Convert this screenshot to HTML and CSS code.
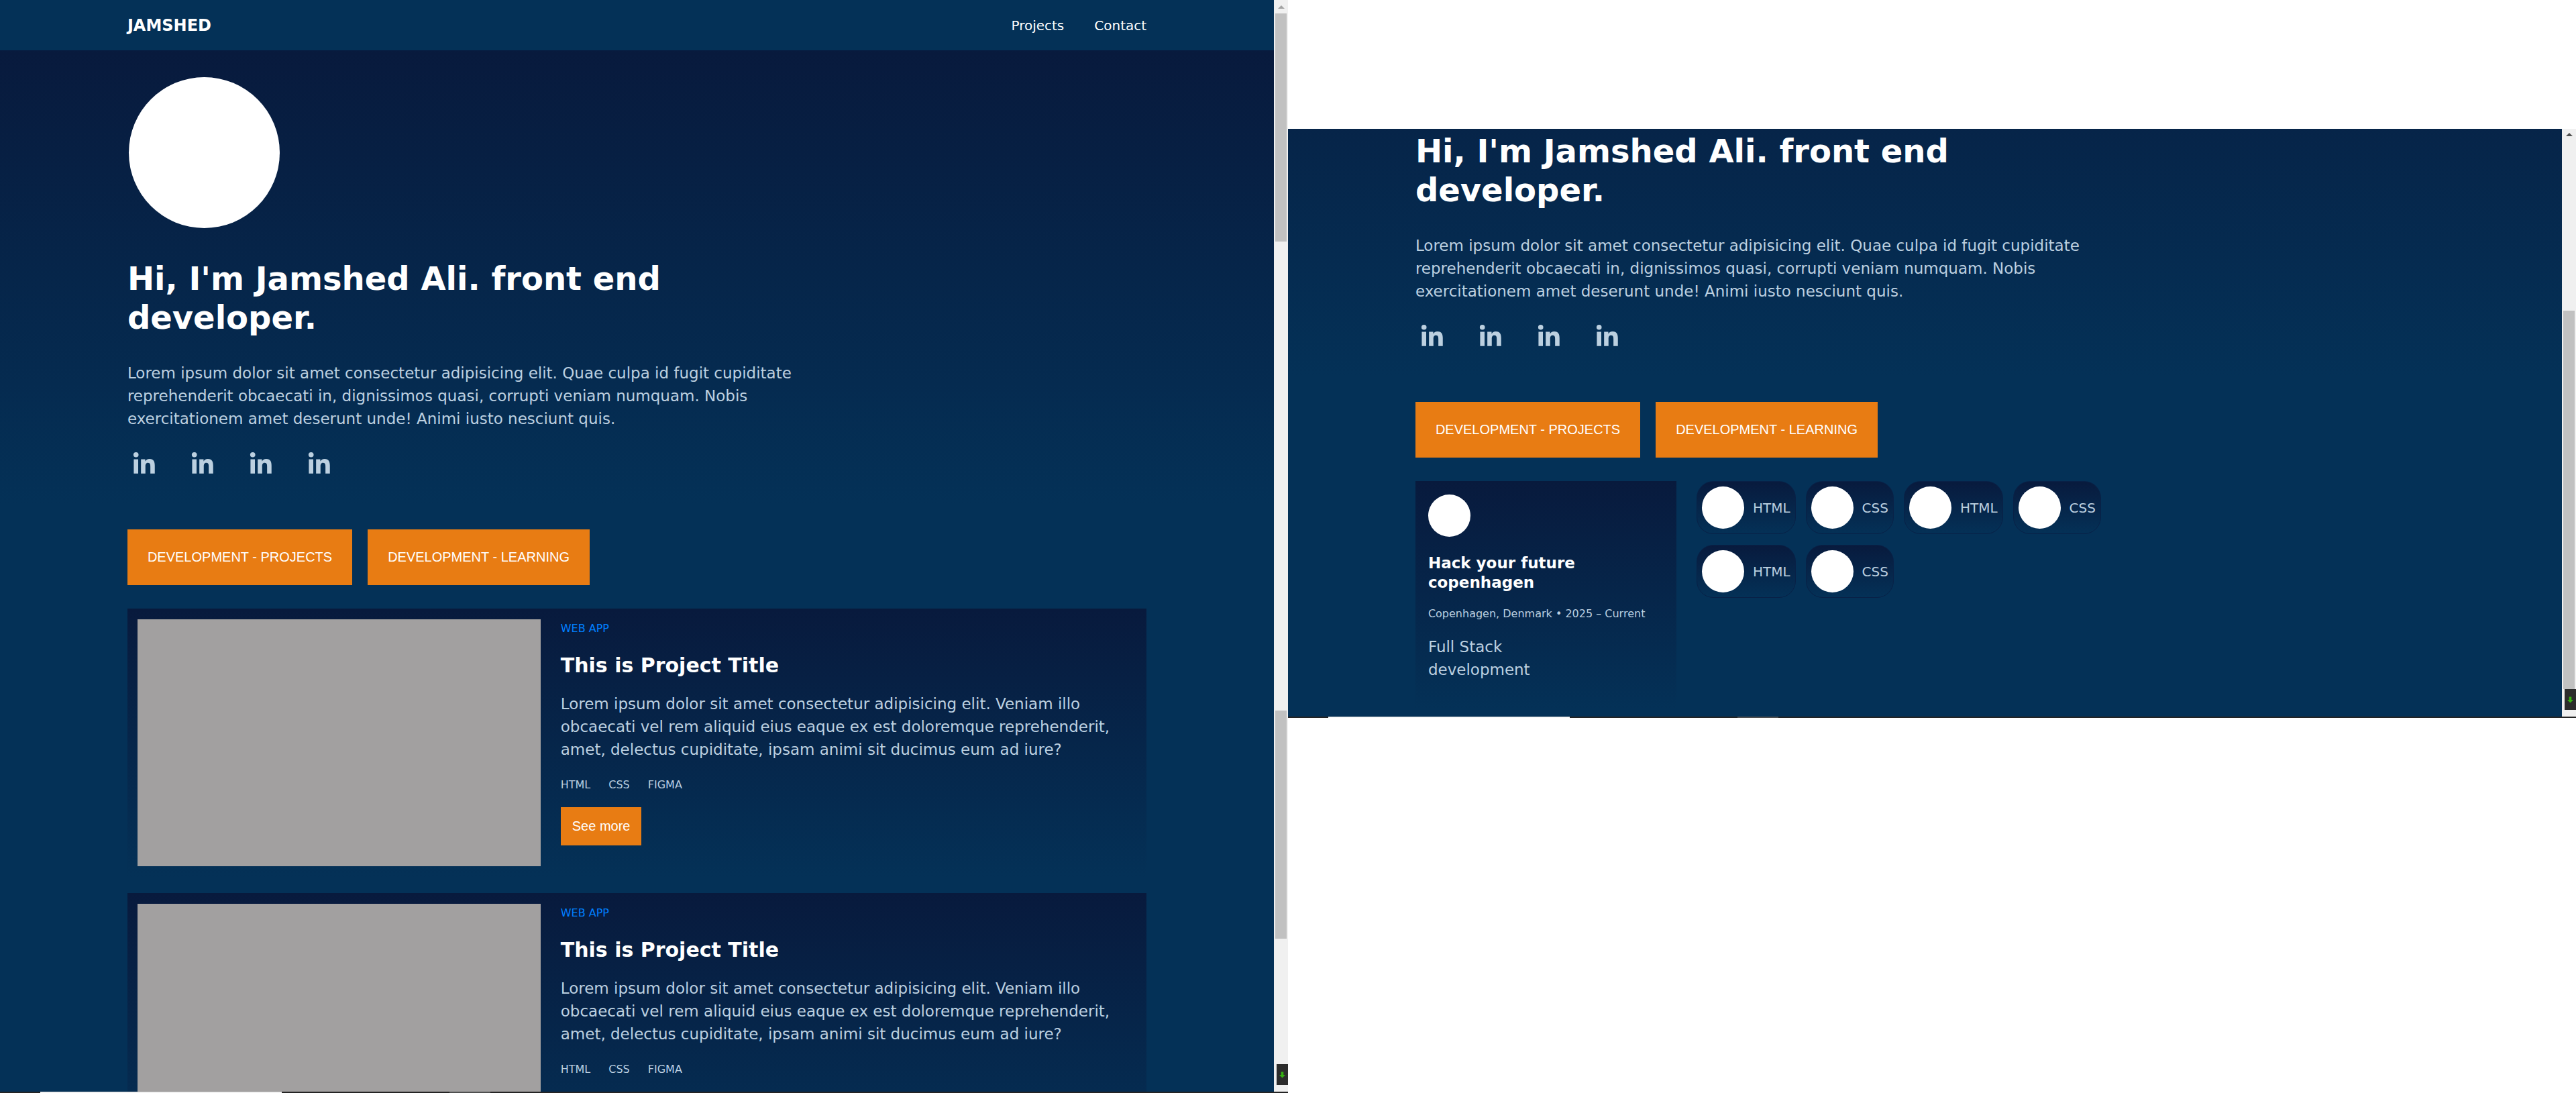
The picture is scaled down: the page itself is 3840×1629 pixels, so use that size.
FILE: index.html
```html
<!DOCTYPE html>
<html lang="en">
<head>
<meta charset="utf-8">
<title>Jamshed Ali – Front end developer</title>
<link rel="stylesheet" href="styles.css">
</head>
<body>
<svg class="defs" aria-hidden="true">
  <symbol id="linkedin" viewBox="0 0 24 24">
    <circle cx="4.983" cy="5.009" r="2.188"/>
    <path d="M9.237 8.855v12.139h3.769v-6.003c0-1.584.298-3.118 2.262-3.118 1.937 0 1.961 1.811 1.961 3.218v5.904H21v-6.657c0-3.27-.704-5.783-4.526-5.783-1.835 0-3.065 1.007-3.568 1.96h-.051v-1.66H9.237zm-6.142 0H6.87v12.139H3.095z"/>
  </symbol>
  <symbol id="badge-arrow" viewBox="0 0 10 10">
    <path d="M3 0h4v5h3l-5 5-5-5h3z"/>
  </symbol>
</svg>

<section class="window window-projects">
  <div class="page">
    <header class="header">
      <nav class="wrap nav">
        <a class="brand" href="#home">JAMSHED</a>
        <ul class="menu">
          <li><a href="#projects">Projects</a></li>
          <li><a href="#contact">Contact</a></li>
        </ul>
      </nav>
    </header>
    <div class="hero" id="home">
      <div class="wrap hero-body">
        <div class="avatar"></div>
        <h1>Hi, I'm Jamshed Ali. front end developer.</h1>
        <p class="lead">Lorem ipsum dolor sit amet consectetur adipisicing elit. Quae culpa id fugit cupiditate reprehenderit obcaecati in, dignissimos quasi, corrupti veniam numquam. Nobis exercitationem amet deserunt unde! Animi iusto nesciunt quis.</p>
        <ul class="social">
          <li><a href="#in-1" aria-label="LinkedIn"><svg><use href="#linkedin"/></svg></a></li>
          <li><a href="#in-2" aria-label="LinkedIn"><svg><use href="#linkedin"/></svg></a></li>
          <li><a href="#in-3" aria-label="LinkedIn"><svg><use href="#linkedin"/></svg></a></li>
          <li><a href="#in-4" aria-label="LinkedIn"><svg><use href="#linkedin"/></svg></a></li>
        </ul>
      </div>
    </div>
    <main class="wrap main" id="projects">
      <div class="tabs">
        <button class="btn" type="button">DEVELOPMENT - PROJECTS</button>
        <button class="btn" type="button">DEVELOPMENT - LEARNING</button>
      </div>
      <div class="projects">
        <article class="project">
          <div class="thumb"></div>
          <div class="project-body">
            <p class="kind">WEB APP</p>
            <h2>This is Project Title</h2>
            <p class="text">Lorem ipsum dolor sit amet consectetur adipisicing elit. Veniam illo obcaecati vel rem aliquid eius eaque ex est doloremque reprehenderit, amet, delectus cupiditate, ipsam animi sit ducimus eum ad iure?</p>
            <ul class="tags"><li>HTML</li><li>CSS</li><li>FIGMA</li></ul>
            <button class="btn btn-small" type="button">See more</button>
          </div>
        </article>
        <article class="project">
          <div class="thumb"></div>
          <div class="project-body">
            <p class="kind">WEB APP</p>
            <h2>This is Project Title</h2>
            <p class="text">Lorem ipsum dolor sit amet consectetur adipisicing elit. Veniam illo obcaecati vel rem aliquid eius eaque ex est doloremque reprehenderit, amet, delectus cupiditate, ipsam animi sit ducimus eum ad iure?</p>
            <ul class="tags"><li>HTML</li><li>CSS</li><li>FIGMA</li></ul>
          </div>
        </article>
      </div>
    </main>
  </div>
  <div class="scroll scroll-projects" aria-hidden="true">
    <span class="arrow"></span>
    <span class="bar"></span>
    <span></span>
    <span class="bar"></span>
    <span></span>
    <span class="badge"><svg><use href="#badge-arrow"/></svg></span>
  </div>
  <div class="taskbar" aria-hidden="true"><span class="task-field"></span><span class="task-app"></span></div>
</section>

<section class="window window-learning">
  <div class="page">
    <div class="hero hero-scrolled">
      <div class="wrap hero-body">
        <h1>Hi, I'm Jamshed Ali. front end developer.</h1>
        <p class="lead">Lorem ipsum dolor sit amet consectetur adipisicing elit. Quae culpa id fugit cupiditate reprehenderit obcaecati in, dignissimos quasi, corrupti veniam numquam. Nobis exercitationem amet deserunt unde! Animi iusto nesciunt quis.</p>
        <ul class="social">
          <li><a href="#in-1" aria-label="LinkedIn"><svg><use href="#linkedin"/></svg></a></li>
          <li><a href="#in-2" aria-label="LinkedIn"><svg><use href="#linkedin"/></svg></a></li>
          <li><a href="#in-3" aria-label="LinkedIn"><svg><use href="#linkedin"/></svg></a></li>
          <li><a href="#in-4" aria-label="LinkedIn"><svg><use href="#linkedin"/></svg></a></li>
        </ul>
      </div>
    </div>
    <main class="wrap main">
      <div class="tabs">
        <button class="btn" type="button">DEVELOPMENT - PROJECTS</button>
        <button class="btn" type="button">DEVELOPMENT - LEARNING</button>
      </div>
      <div class="learning">
        <article class="course">
          <div class="dot"></div>
          <h3>Hack your future copenhagen</h3>
          <p class="meta">Copenhagen, Denmark • 2025 – Current</p>
          <p class="text">Full Stack development</p>
        </article>
        <ul class="skills">
          <li><span class="dot"></span>HTML</li>
          <li><span class="dot"></span>CSS</li>
          <li><span class="dot"></span>HTML</li>
          <li><span class="dot"></span>CSS</li>
          <li><span class="dot"></span>HTML</li>
          <li><span class="dot"></span>CSS</li>
        </ul>
      </div>
    </main>
  </div>
  <div class="scroll scroll-learning" aria-hidden="true">
    <span class="arrow arrow-dark"></span>
    <span></span>
    <span class="bar"></span>
    <span class="badge"><svg><use href="#badge-arrow"/></svg></span>
  </div>
  <div class="taskbar" aria-hidden="true"><span class="task-field"></span><span class="task-app"></span></div>
</section>
</body>
</html>
```
FILE: styles.css
```css
:root {
  --night: #081a3d;
  --sea: #043157;
  --orange: #e87c13;
  --mist: #bcd0e0;
}

* { box-sizing: border-box; margin: 0; padding: 0; }

body {
  display: grid;
  grid-template-columns: 1fr 1fr;
  align-items: start;
  background: #fff;
  color: var(--mist);
  font: 23px/34px "DejaVu Sans", Verdana, sans-serif;
}

ul { list-style: none; }
a { color: inherit; text-decoration: none; }
h1, h2, h3 { color: #fff; font-weight: 700; }
.defs { position: absolute; width: 0; height: 0; }

.window {
  display: grid;
  grid-template-columns: 1fr 21px;
  grid-template-rows: minmax(0, 1fr) 2px;
  background: var(--sea);
}
.window-projects { height: 100vh; overflow: hidden; }
.window-learning { margin-top: 192px; }
.page { min-width: 0; min-height: 0; overflow: hidden; }
.wrap { width: 80%; margin: 0 auto; }

.header { background: var(--sea); }
.nav {
  display: flex;
  justify-content: space-between;
  align-items: center;
  height: 75px;
  color: #fff;
}
.brand { font-size: 24px; font-weight: 700; }
.menu { display: flex; gap: 45px; font-size: 20px; }

.hero { background: linear-gradient(var(--night), var(--sea)); }
.hero-body { padding: 40px 0; }
.avatar {
  width: 225px;
  height: 225px;
  margin: 0 2px 46px;
  border-radius: 50%;
  background: #fff;
}
.hero h1 { max-width: 1000px; font-size: 48px; line-height: 58px; }
.lead { max-width: 1000px; margin: 37px 0 28px; }
.hero-scrolled { background: linear-gradient(var(--night) -307px, var(--sea)); }
.hero-scrolled .hero-body { padding-top: 4px; }

.social { display: flex; gap: 45px; padding-left: 4px; }
.social a, .social svg { display: block; width: 42px; height: 42px; fill: var(--mist); }

.main { padding-top: 38px; }
.tabs { display: flex; gap: 23px; margin-bottom: 35px; }
.btn {
  padding: 30px;
  border: 0;
  background: var(--orange);
  color: #fff;
  font: 20px/23px "Liberation Sans", Arial, sans-serif;
}
.btn-small { padding: 17px; }

.projects { display: grid; gap: 24px; }
.project {
  display: grid;
  grid-template-columns: 7fr 10fr;
  gap: 30px;
  padding: 16px 15px;
  background: linear-gradient(var(--night), var(--sea));
}
.thumb { height: 368px; background: #a2a0a0; }
.kind { color: #0080ff; font-size: 16px; line-height: 28px; }
.project h2 { margin: 23px 0 22px; font-size: 30px; line-height: 36px; }
.tags {
  display: flex;
  gap: 27px;
  margin: 22px 0 19px;
  font-size: 16px;
  line-height: 28px;
}

.learning { display: flex; align-items: flex-start; gap: 30px; padding-bottom: 12px; }
.course {
  width: 389px;
  padding: 20px 19px 41px;
  background: linear-gradient(var(--night), var(--sea));
}
.course h3 { max-width: 260px; margin: 25px 0 18px; font-size: 23px; line-height: 29px; }
.meta { font-size: 16px; line-height: 28px; white-space: nowrap; }
.course .text { max-width: 200px; margin-top: 18px; }
.dot { width: 63px; height: 63px; border-radius: 50%; background: #fff; }
.skills { display: flex; flex-wrap: wrap; gap: 16px 15px; max-width: 640px; }
.skills li {
  display: flex;
  align-items: center;
  gap: 13px;
  padding: 7px;
  border: 1px solid #082147;
  border-radius: 25px;
  background: linear-gradient(var(--night), var(--sea)) border-box;
  font-size: 20px;
  line-height: 34px;
}

.scroll { display: grid; background: #f0f0f0; }
.scroll-projects { grid-template-rows: 20px 340fr 699fr 340fr 187fr 31px 10px; }
.scroll-learning { grid-template-rows: 17px 254fr 564fr 31px 10px; }
.bar { margin: 0 2px; background: #c1c1c1; }
.arrow {
  align-self: center;
  justify-self: center;
  border: solid transparent;
  border-width: 0 5px 5px;
  border-bottom-color: #a3a3a3;
}
.arrow-dark { border-bottom-color: #505050; }
.badge { display: grid; place-items: center; margin-left: 4px; background: #2c2c2c; }
.badge svg { width: 9px; height: 10px; fill: #36b012; }

.taskbar {
  grid-column: 1 / -1;
  display: grid;
  grid-template-columns: 360fr 250fr 61fr 1189fr;
  padding-left: 60px;
  background: #242424;
}
.task-field { border-top: 1px solid #ccc; background: #fff; }
.task-app { grid-column: 3; background: #4f4f4f; }
```
